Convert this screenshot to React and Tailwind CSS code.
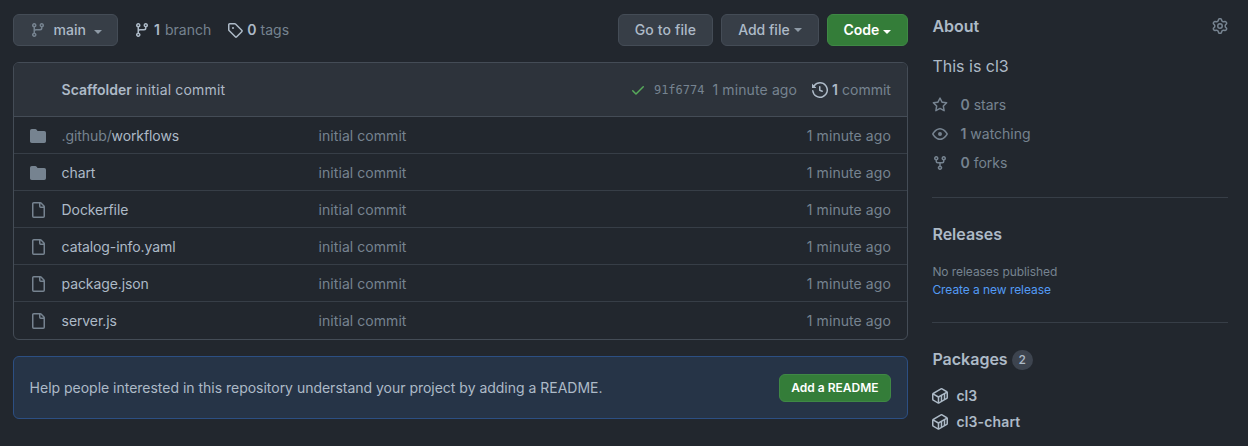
const PATHS = {
  branch:
    'M11.75 2.5a.75.75 0 100 1.5.75.75 0 000-1.5zm-2.25.75a2.25 2.25 0 113 2.122V6A2.5 2.5 0 0110 8.5H6a1 1 0 00-1 1v1.128a2.251 2.251 0 11-1.5 0V5.372a2.25 2.25 0 111.5 0v1.836A2.492 2.492 0 016 7h4a1 1 0 001-1v-.628A2.25 2.25 0 019.5 3.25zM4.25 12a.75.75 0 100 1.5.75.75 0 000-1.5zM3.5 3.25a.75.75 0 111.5 0 .75.75 0 01-1.5 0z',
  tag: 'M2.5 7.775V2.75a.25.25 0 01.25-.25h5.025a.25.25 0 01.177.073l6.25 6.25a.25.25 0 010 .354l-5.025 5.025a.25.25 0 01-.354 0l-6.25-6.25a.25.25 0 01-.073-.177zm-1.5 0V2.75C1 1.784 1.784 1 2.75 1h5.025c.464 0 .91.184 1.238.513l6.25 6.25a1.75 1.75 0 010 2.474l-5.026 5.026a1.75 1.75 0 01-2.474 0l-6.25-6.25A1.75 1.75 0 011 7.775zM6 5a1 1 0 100 2 1 1 0 000-2z',
  check:
    'M13.78 4.22a.75.75 0 010 1.06l-7.25 7.25a.75.75 0 01-1.06 0L2.22 9.28a.75.75 0 011.06-1.06L6 10.94l6.72-6.72a.75.75 0 011.06 0z',
  history:
    'M1.643 3.143L.427 1.927A.25.25 0 000 2.104V5.75c0 .138.112.25.25.25h3.646a.25.25 0 00.177-.427L2.715 4.215a6.5 6.5 0 11-1.18 4.458.75.75 0 10-1.493.154 8.001 8.001 0 101.6-5.684zM7.75 4a.75.75 0 01.75.75v2.992l2.028.812a.75.75 0 01-.557 1.392l-2.5-1A.75.75 0 017 8.25v-3.5A.75.75 0 017.75 4z',
  folder:
    'M1.75 1A1.75 1.75 0 000 2.75v10.5C0 14.216.784 15 1.75 15h12.5A1.75 1.75 0 0016 13.25v-8.5A1.75 1.75 0 0014.25 3h-6.5a.25.25 0 01-.2-.1l-.9-1.2c-.33-.44-.85-.7-1.4-.7h-3.5z',
  file: 'M2 1.75C2 .784 2.784 0 3.75 0h6.586c.464 0 .909.184 1.237.513l2.914 2.914c.329.328.513.773.513 1.237v9.586A1.75 1.75 0 0 1 13.25 16h-9.5A1.75 1.75 0 0 1 2 14.25Zm1.75-.25a.25.25 0 0 0-.25.25v12.5c0 .138.112.25.25.25h9.5a.25.25 0 0 0 .25-.25V6h-2.75A1.75 1.75 0 0 1 9 4.25V1.5Zm6.75.062V4.25c0 .138.112.25.25.25h2.688l-.011-.013-2.914-2.914-.013-.011Z',
  star: 'M8 .25a.75.75 0 01.673.418l1.882 3.815 4.21.612a.75.75 0 01.416 1.279l-3.046 2.97.719 4.192a.75.75 0 01-1.088.791L8 12.347l-3.766 1.98a.75.75 0 01-1.088-.79l.72-4.194L.818 6.374a.75.75 0 01.416-1.28l4.21-.611L7.327.668A.75.75 0 018 .25zm0 2.445L6.615 5.5a.75.75 0 01-.564.41l-3.097.45 2.24 2.184a.75.75 0 01.216.664l-.528 3.084 2.769-1.456a.75.75 0 01.698 0l2.77 1.456-.53-3.084a.75.75 0 01.216-.664l2.24-2.183-3.096-.45a.75.75 0 01-.564-.41L8 2.694v.001z',
  eye: 'M1.679 7.932c.412-.621 1.242-1.75 2.366-2.717C5.175 4.242 6.527 3.5 8 3.5c1.473 0 2.824.742 3.955 1.715 1.124.967 1.954 2.096 2.366 2.717a.119.119 0 010 .136c-.412.621-1.242 1.75-2.366 2.717C10.825 11.758 9.473 12.5 8 12.5c-1.473 0-2.824-.742-3.955-1.715C2.92 9.818 2.09 8.69 1.679 8.068a.119.119 0 010-.136zM8 2c-1.981 0-3.67.992-4.933 2.078C1.797 5.169.88 6.423.43 7.1a1.619 1.619 0 000 1.798c.45.678 1.367 1.932 2.637 3.024C4.329 13.008 6.019 14 8 14c1.981 0 3.67-.992 4.933-2.078 1.27-1.091 2.187-2.345 2.637-3.023a1.619 1.619 0 000-1.798c-.45-.678-1.367-1.932-2.637-3.023C11.671 2.992 9.981 2 8 2zm0 8a2 2 0 100-4 2 2 0 000 4z',
  fork: 'M5 3.25a.75.75 0 11-1.5 0 .75.75 0 011.5 0zm0 2.122a2.25 2.25 0 10-1.5 0v.878A2.25 2.25 0 005.75 8.5h1.5v2.128a2.251 2.251 0 101.5 0V8.5h1.5a2.25 2.25 0 002.25-2.25v-.878a2.25 2.25 0 10-1.5 0v.878a.75.75 0 01-.75.75h-4.5A.75.75 0 015 6.25v-.878zm3.75 7.378a.75.75 0 11-1.5 0 .75.75 0 011.5 0zm3-8.75a.75.75 0 100-1.5.75.75 0 000 1.5z',
  gear: 'M8 0a8.2 8.2 0 0 1 .701.031C9.444.095 9.99.645 10.16 1.29l.288 1.107c.018.066.079.158.212.224.231.114.454.243.668.386.123.082.233.09.299.071l1.103-.303c.644-.176 1.392.021 1.82.63.27.385.506.792.704 1.218.315.675.111 1.422-.364 1.891l-.814.806c-.049.048-.098.147-.088.294.016.257.016.515 0 .772-.01.147.038.246.088.294l.814.806c.475.469.679 1.216.364 1.891a7.977 7.977 0 0 1-.704 1.217c-.428.61-1.176.807-1.82.63l-1.102-.302c-.067-.019-.177-.011-.3.071a5.909 5.909 0 0 1-.668.386c-.133.066-.194.158-.211.224l-.29 1.106c-.168.646-.715 1.196-1.458 1.26a8.006 8.006 0 0 1-1.402 0c-.743-.064-1.289-.614-1.458-1.26l-.289-1.106c-.018-.066-.079-.158-.212-.224a5.738 5.738 0 0 1-.668-.386c-.123-.082-.233-.09-.299-.071l-1.103.303c-.644.176-1.392-.021-1.82-.63a8.12 8.12 0 0 1-.704-1.218c-.315-.675-.111-1.422.363-1.891l.815-.806c.05-.048.098-.147.088-.294a6.214 6.214 0 0 1 0-.772c.01-.147-.038-.246-.088-.294l-.815-.806C.635 6.045.431 5.298.746 4.623a7.92 7.92 0 0 1 .704-1.217c.428-.61 1.176-.807 1.82-.63l1.102.302c.067.019.177.011.3-.071.214-.143.437-.272.668-.386.133-.066.194-.158.211-.224l.29-1.106C6.009.645 6.556.095 7.299.03 7.53.01 7.764 0 8 0Zm-.571 1.525c-.036.003-.108.036-.137.146l-.289 1.105c-.147.561-.549.967-.998 1.189-.173.086-.34.183-.5.29-.417.278-.97.423-1.529.27l-1.103-.303c-.109-.03-.175.016-.195.045-.22.312-.412.644-.573.99-.014.031-.021.11.059.19l.815.806c.411.406.562.957.53 1.456a4.709 4.709 0 0 0 0 .582c.032.499-.119 1.05-.53 1.456l-.815.806c-.081.08-.073.159-.059.19.162.346.353.677.573.989.02.03.085.076.195.046l1.102-.303c.56-.153 1.113-.008 1.53.27.161.107.328.204.501.29.447.222.85.629.997 1.189l.289 1.105c.029.109.101.143.137.146a6.6 6.6 0 0 0 1.142 0c.036-.003.108-.036.137-.146l.289-1.105c.147-.561.549-.967.998-1.189.173-.086.34-.183.5-.29.417-.278.97-.423 1.529-.27l1.103.303c.109.029.175-.016.195-.045.22-.313.411-.644.573-.99.014-.031.021-.11-.059-.19l-.815-.806c-.411-.406-.562-.957-.53-1.456a4.709 4.709 0 0 0 0-.582c-.032-.499.119-1.05.53-1.456l.815-.806c.081-.08.073-.159.059-.19a6.464 6.464 0 0 0-.573-.989c-.02-.03-.085-.076-.195-.046l-1.102.303c-.56.153-1.113.008-1.53-.27a4.44 4.44 0 0 0-.501-.29c-.447-.222-.85-.629-.997-1.189l-.289-1.105c-.029-.11-.101-.143-.137-.146a6.6 6.6 0 0 0-1.142 0ZM11 8a3 3 0 1 1-6 0 3 3 0 0 1 6 0ZM9.5 8a1.5 1.5 0 1 0-3.001.001A1.5 1.5 0 0 0 9.5 8Z',
  container:
    'M10.41.24l4.711 2.774A1.767 1.767 0 0116 4.54v5.01a1.77 1.77 0 01-.88 1.53l-7.753 4.521-.002.001a1.767 1.767 0 01-1.774 0H5.59L.873 12.85A1.762 1.762 0 010 11.327V6.292c0-.304.078-.598.22-.855l.004-.005.01-.019c.15-.262.369-.486.64-.643L8.641.239a1.75 1.75 0 011.765 0l.002.001zM9.397 1.534a.25.25 0 01.252 0l4.115 2.422-7.152 4.148a.267.267 0 01-.269 0L2.227 5.716l7.17-4.182zM7.365 9.402L8.73 8.61v4.46l-1.5.875V9.473a1.77 1.77 0 00.136-.071zm2.864 2.794V7.741l1.521-.882v4.45l-1.521.887zm3.021-1.762l1.115-.65h.002a.268.268 0 00.133-.232V5.264l-1.25.725v4.445zm-11.621 1.12l4.1 2.393V9.474a1.77 1.77 0 01-.138-.072L1.5 7.029v4.298c0 .095.05.181.129.227z',
};

function Icon({ name, className = '' }) {
  return (
    <svg viewBox="0 0 16 16" fill="currentColor" fillRule="evenodd" className={`size-4 shrink-0 ${className}`}>
      <path d={PATHS[name]} />
    </svg>
  );
}

function Caret({ className = '' }) {
  return (
    <svg viewBox="0 0 8 4" fill="currentColor" className={`h-1 w-2 shrink-0 ${className}`}>
      <path d="M0 0h8L4 4z" />
    </svg>
  );
}

const FILES = [
  { icon: 'folder', prefix: '.github/', name: 'workflows' },
  { icon: 'folder', name: 'chart' },
  { icon: 'file', name: 'Dockerfile' },
  { icon: 'file', name: 'catalog-info.yaml' },
  { icon: 'file', name: 'package.json' },
  { icon: 'file', name: 'server.js' },
];

function Toolbar() {
  return (
    <div className="flex h-8 items-center">
      <button className="flex h-8 w-[105.5px] items-center rounded-md border border-[#444c56] bg-[#373e47] pl-4 font-medium text-[#adbac7]">
        <Icon name="branch" className="text-[#768390]" />
        <span className="ml-2">main</span>
        <Caret className="mt-1 ml-2 text-[#8e9aa6]" />
      </button>
      <a className="ml-4 flex items-center">
        <Icon name="branch" className="text-[#adbac7]" />
        <b className="ml-1 font-semibold text-[#adbac7]">1</b>
        <span className="ml-[5px]">branch</span>
      </a>
      <a className="ml-4 flex items-center">
        <Icon name="tag" className="text-[#adbac7]" />
        <b className="ml-1 font-semibold text-[#adbac7]">0</b>
        <span className="ml-1">tags</span>
      </a>
      <div className="ml-auto flex gap-2">
        <button className="flex h-8 w-[95px] items-center justify-center rounded-md border border-[#444c56] bg-[#373e47] font-medium tracking-[0.01em] text-[#adbac7]">
          Go to file
        </button>
        <button className="flex h-8 w-[98px] items-center justify-center gap-1 rounded-md border border-[#444c56] bg-[#373e47] font-medium text-[#adbac7]">
          Add file
          <Caret className="text-[#8e9aa6]" />
        </button>
        <button className="flex h-8 w-[81px] items-center justify-center gap-1 rounded-md border border-[#3f8845] bg-[#347d39] font-semibold text-white">
          Code
          <Caret className="mt-1" />
        </button>
      </div>
    </div>
  );
}

function FileTable() {
  return (
    <div className="mt-4 overflow-hidden rounded-md border border-[#444c56]">
      <div className="flex h-[54px] items-center border-b border-[#444c56] bg-[#2d333b] pt-px pr-4 pl-12 text-[#adbac7]">
        <b className="font-semibold">Scaffolder</b>
        <span className="ml-1 tracking-[0.012em]">initial commit</span>
        <Icon name="check" className="ml-auto text-[#57ab5a]" />
        <code className="ml-2 font-['DejaVu_Sans_Mono',monospace] text-xs text-[#768390]">91f6774</code>
        <span className="ml-2 tracking-[0.008em] text-[#768390]">1 minute ago</span>
        <Icon name="history" className="ml-[15px]" />
        <b className="ml-1 font-semibold">1</b>
        <span className="ml-1 text-[#768390]">commit</span>
      </div>
      {FILES.map((file) => (
        <div
          key={file.name}
          className="flex h-[37px] items-center border-b border-[#373e47] px-4 pt-0.5 last:border-b-0 last:pt-px"
        >
          <Icon name={file.icon} />
          <div className="ml-4 w-[257px] tracking-[-0.007em] text-[#adbac7]">
            {file.prefix && <span className="text-[#768390]">{file.prefix}</span>}
            {file.name}
          </div>
          <div className="tracking-[0.004em]">initial commit</div>
          <div className="ml-auto tracking-[0.005em]">1 minute ago</div>
        </div>
      ))}
    </div>
  );
}

function Sidebar() {
  return (
    <aside className="ml-[24.5px] w-[295.5px] shrink-0">
      <div className="flex h-6 items-center justify-between">
        <h2 className="text-base font-semibold text-[#adbac7]">About</h2>
        <Icon name="gear" />
      </div>
      <p className="mt-4 text-base text-[#adbac7]">This is cl3</p>
      <ul className="mt-4 flex flex-col gap-2">
        <li className="flex h-[21px] items-center">
          <Icon name="star" className="mr-3" />
          <b className="mr-1 font-semibold">0</b>stars
        </li>
        <li className="flex h-[21px] items-center">
          <Icon name="eye" className="mr-3" />
          <b className="mr-1 font-semibold">1</b>watching
        </li>
        <li className="flex h-[21px] items-center">
          <Icon name="fork" className="mr-3" />
          <b className="mr-1 font-semibold">0</b>forks
        </li>
      </ul>
      <section className="mt-6 border-t border-[#373e47] pt-6">
        <h2 className="text-base font-semibold text-[#adbac7]">Releases</h2>
        <p className="mt-[17px] text-xs leading-[18px] tracking-[-0.005em]">No releases published</p>
        <p className="text-xs leading-[18px] tracking-[-0.005em] text-[#539bf5]">Create a new release</p>
      </section>
      <section className="mt-[23px] border-t border-[#373e47] pt-6">
        <h2 className="flex items-center text-base font-semibold text-[#adbac7]">
          Packages
          <span className="mt-0.5 ml-1 flex h-5 w-[21px] items-center justify-center rounded-full bg-[#3d444f] text-xs font-medium">
            2
          </span>
        </h2>
        <ul className="mt-3.5 flex flex-col gap-[5px] font-semibold text-[#adbac7]">
          <li className="flex h-[21px] items-center gap-2">
            <Icon name="container" />
            cl3
          </li>
          <li className="flex h-[21px] items-center gap-2 tracking-[0.01em]">
            <Icon name="container" />
            cl3-chart
          </li>
        </ul>
      </section>
    </aside>
  );
}

export default function App() {
  return (
    <div className="flex h-[446px] w-[1248px] overflow-hidden bg-[#22272e] pt-3.5 pl-[12.6px] font-['Inter',sans-serif] text-sm whitespace-nowrap text-[#768390]">
      <main className="w-[895.3px] shrink-0">
        <Toolbar />
        <FileTable />
        <div className="mt-4 flex h-[63px] items-center justify-between rounded-md border border-[#2c4f83] bg-[#263447] px-4 text-[#adbac7]">
          <span className="tracking-[-0.001em]">
            Help people interested in this repository understand your project by adding a README.
          </span>
          <button className="flex h-7 w-28 items-center justify-center rounded-md border border-[#3f8845] bg-[#347d39] text-xs font-semibold text-white">
            Add a README
          </button>
        </div>
      </main>
      <Sidebar />
    </div>
  );
}
